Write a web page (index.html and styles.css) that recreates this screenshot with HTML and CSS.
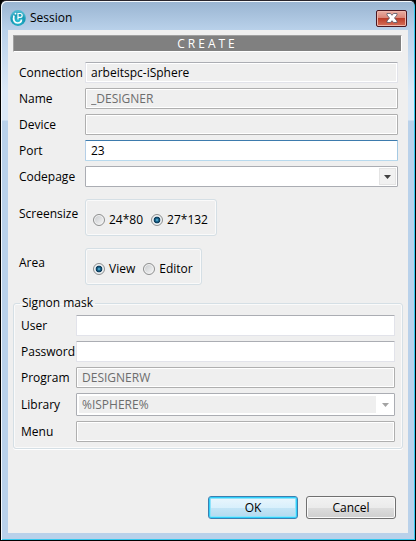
FILE: index.html
```html
<!DOCTYPE html>
<html lang="en">
<head>
<meta charset="utf-8">
<title>Session</title>
<link rel="stylesheet" href="styles.css">
</head>
<body>
<main class="window">
  <header class="titlebar">
    <svg class="app-icon" viewBox="0 0 16 16" aria-hidden="true">
      <defs><radialGradient id="orb" cx="0.5" cy="0.7" r="0.6"><stop offset="0" stop-color="#2bbfd4"/><stop offset="0.7" stop-color="#1699b4"/><stop offset="1" stop-color="#4bb8d0"/></radialGradient></defs>
      <circle cx="8" cy="8" r="7.9" fill="url(#orb)"/>
      <path d="M4 5.500C2.700 10 4.400 13 7.600 13c2.600 0 3.800-1.500 3.800-3.500" fill="none" stroke="#fff" stroke-width="1.700"/>
      <path d="M8 9.500V3.500h2.200c2.600 0 2.600 3.800 0 3.800H8" fill="none" stroke="#fff" stroke-width="1.200"/>
      <circle cx="5.500" cy="3.700" r="0.900" fill="#fff"/>
    </svg>
    <h1 class="title">Session</h1>
    <button class="close" type="button" aria-label="Close">
      <svg viewBox="0 0 12 10" aria-hidden="true"><path d="M1 .5h3.500L6 2.300 7.500.5H11v1.500L8.500 5 11 8v1.500H7.500L6 7.700 4.500 9.500H1V8L3.500 5 1 2z" fill="#fff" stroke="#535666" stroke-width="0.800"/></svg>
    </button>
  </header>
  <form class="client">
    <h2 class="banner">CREATE</h2>
    <div class="settings">
      <label for="connection">Connection</label>
      <input class="field readonly" id="connection" type="text" value="arbeitspc-iSphere" readonly>
      <label for="name">Name</label>
      <input class="field" id="name" type="text" value="_DESIGNER" disabled>
      <label for="device">Device</label>
      <input class="field" id="device" type="text" disabled>
      <label for="port">Port</label>
      <input class="field active" id="port" type="text" value="23">
      <label for="codepage">Codepage</label>
      <div class="combo">
        <select class="field" id="codepage"><option></option></select>
        <span class="arrow"><svg viewBox="0 0 7 4" aria-hidden="true"><path d="M0 0h7L3.500 4z"/></svg></span>
      </div>
    </div>
    <div class="choices">
      <span class="choice-label" id="size-label">Screensize</span>
      <div class="group" role="radiogroup" aria-labelledby="size-label">
        <label><input type="radio" name="size">24*80</label>
        <label><input type="radio" name="size" checked>27*132</label>
      </div>
      <span class="choice-label" id="area-label">Area</span>
      <div class="group" role="radiogroup" aria-labelledby="area-label">
        <label><input type="radio" name="area" checked>View</label>
        <label><input type="radio" name="area">Editor</label>
      </div>
    </div>
    <fieldset class="signon">
      <legend>Signon mask</legend>
      <div class="signon-grid">
        <label for="user">User</label>
        <input class="field" id="user" type="text">
        <label for="password">Password</label>
        <input class="field" id="password" type="password">
        <label for="program">Program</label>
        <input class="field" id="program" type="text" value="DESIGNERW" disabled>
        <label for="library">Library</label>
        <div class="combo disabled">
          <select class="field" id="library" disabled><option>%ISPHERE%</option></select>
          <span class="arrow"><svg viewBox="0 0 7 4" aria-hidden="true"><path d="M0 0h7L3.500 4z"/></svg></span>
        </div>
        <label for="menu">Menu</label>
        <input class="field" id="menu" type="text" disabled>
      </div>
    </fieldset>
    <footer class="actions">
      <button class="button primary" type="button">OK</button>
      <button class="button" type="button">Cancel</button>
    </footer>
  </form>
</main>
</body>
</html>
```
FILE: styles.css
```css
* {
  box-sizing: border-box;
}

body {
  margin: 0;
  background: #000;
  color: #000;
  font: 12px/16px "Open Sans", "Noto Sans", sans-serif;
}

input,
select,
button {
  font: inherit;
  color: inherit;
}

.window {
  display: flex;
  flex-direction: column;
  min-height: 100vh;
  padding: 0 6px 6px;
  border: 1px solid #000;
  border-top-color: #28242c;
  border-radius: 6px 6px 0 0;
  background:
    linear-gradient(#99b4d1, #b9d1ea 29px, #dce9f7 90px, #dce9f7 119px, #b9d1ea 120px);
  box-shadow: inset 1px 1px #f4f8fc, inset -1px -1px #35c8ee;
}

.titlebar {
  display: flex;
  align-items: center;
  height: 29px;
  padding: 5px 2px 0 3px;
}

.app-icon {
  width: 16px;
  height: 16px;
}

.title {
  flex: 1;
  margin: 0 0 0 4px;
  font-size: 12px;
  font-weight: 400;
}

.close {
  display: grid;
  place-items: center;
  width: 31px;
  height: 17px;
  padding: 0;
  border: 1px solid #4b1721;
  border-radius: 2px;
  background: linear-gradient(#e9aea3, #d98375 48%, #bb3d29 50%, #d6705a);
  box-shadow: inset 0 0 0 1px #eeb6aa;
}

.close svg {
  width: 12px;
  height: 10px;
}

.client {
  display: flex;
  flex: 1;
  flex-direction: column;
  margin: 0 1px 1px;
  padding: 5px;
  background: #efefef;
}

.banner {
  margin: 0 1px 0 0;
  border: 1px solid #fff;
  border-color: #a0a0a0 #fff #fff #a0a0a0;
  background: #808080;
  color: #fff;
  font-size: 12px;
  font-weight: 400;
  line-height: 15px;
  letter-spacing: 3px;
  text-align: center;
}

.settings {
  display: grid;
  grid-template-columns: 66px 1fr;
  gap: 5px 0;
  align-items: center;
  margin: 10px 5px 0 6px;
}

.field {
  display: block;
  width: 100%;
  height: 21px;
  min-width: 0;
  padding: 0 5px;
  border: 1px solid #e2e3ea;
  border-top-color: #abadb3;
  border-radius: 1px;
  outline: 0;
  background: #fff;
}

.readonly {
  background: #efefef;
  box-shadow: inset 0 0 0 1px #fff;
}

.field:disabled {
  border-color: #afafaf;
  background: #efefef;
  box-shadow: inset 0 0 0 1px #fff;
  color: #6d6d6d;
  opacity: 1;
}

.active {
  border-color: #3d7bad #a4c9e3 #b7d9ed #b5cfe7;
}

.combo {
  position: relative;
}

.combo .field {
  border-color: #abadb3;
  appearance: none;
}

.arrow {
  position: absolute;
  top: 2px;
  right: 2px;
  bottom: 2px;
  display: grid;
  place-items: center;
  width: 17px;
  border: 1px solid #e4e4e4;
  background: #f1f1f1;
  pointer-events: none;
}

.arrow svg {
  width: 7px;
  height: 4px;
  fill: #404040;
}

.combo.disabled .field {
  height: 23px;
  box-shadow: inset 0 0 0 2px #fff;
}

.disabled .arrow {
  right: 1px;
  width: 18px;
  border-color: #fff;
  background: #fff;
}

.disabled .arrow svg {
  fill: #a3a3a3;
}

.choices {
  display: grid;
  grid-template-columns: 66px auto;
  gap: 12px 0;
  justify-content: start;
  justify-items: start;
  margin: 12px 6px 0;
}

.choice-label {
  margin-top: 7px;
}

.group {
  display: flex;
  gap: 8px;
  align-items: center;
  height: 37px;
  padding: 5px 8px 0 7px;
  border: 1px solid #d5dfe5;
  border-radius: 3px;
  box-shadow: inset 0 0 0 1px #fafafa;
}

.group label {
  display: flex;
  gap: 4px;
  align-items: center;
}

.group input {
  width: 12px;
  height: 12px;
  margin: 0;
  border: 1px solid #8e8f8f;
  border-radius: 50%;
  appearance: none;
  background: linear-gradient(135deg, #c6c9cc, #f8f8f8);
  box-shadow: inset 0 0 0 1px #f4f4f4;
}

.group input:checked {
  background: radial-gradient(circle at 50% 50%, #6cc8ec 0, #1b668d 22%, #0b3654 42%, #dce5ea 52%);
}

.signon {
  min-width: 0;
  margin: 10px 0 0;
  padding: 0;
  border: 1px solid #d5dfe5;
  border-radius: 3px;
  box-shadow: inset 0 0 0 1px #fafafa, 0 1px #fff;
}

.signon legend {
  margin-left: 6px;
  padding: 0 2px;
}

.signon-grid {
  display: grid;
  grid-template-columns: 55px 1fr;
  gap: 5px 0;
  align-items: center;
  padding: 4px 7px 6px;
}

.actions {
  display: flex;
  gap: 8px;
  justify-content: flex-end;
  margin-top: auto;
  padding: 0 7px 9px 0;
}

.button {
  width: 90px;
  height: 23px;
  padding: 0;
  border: 1px solid #707070;
  border-radius: 3px;
  background: linear-gradient(#f2f2f2, #ebebeb 50%, #dddddd 51%, #cfcfcf);
  box-shadow: inset 0 0 0 1px #fafafa;
}

.primary {
  border-color: #3c7fb1;
  background: linear-gradient(#eaf6fd, #d9f0fc 50%, #c4e5f6 51%, #b2d9ef);
  box-shadow: inset 0 0 0 1px #2fd0fa, inset 0 0 0 2px #8fe3fb;
}
```
